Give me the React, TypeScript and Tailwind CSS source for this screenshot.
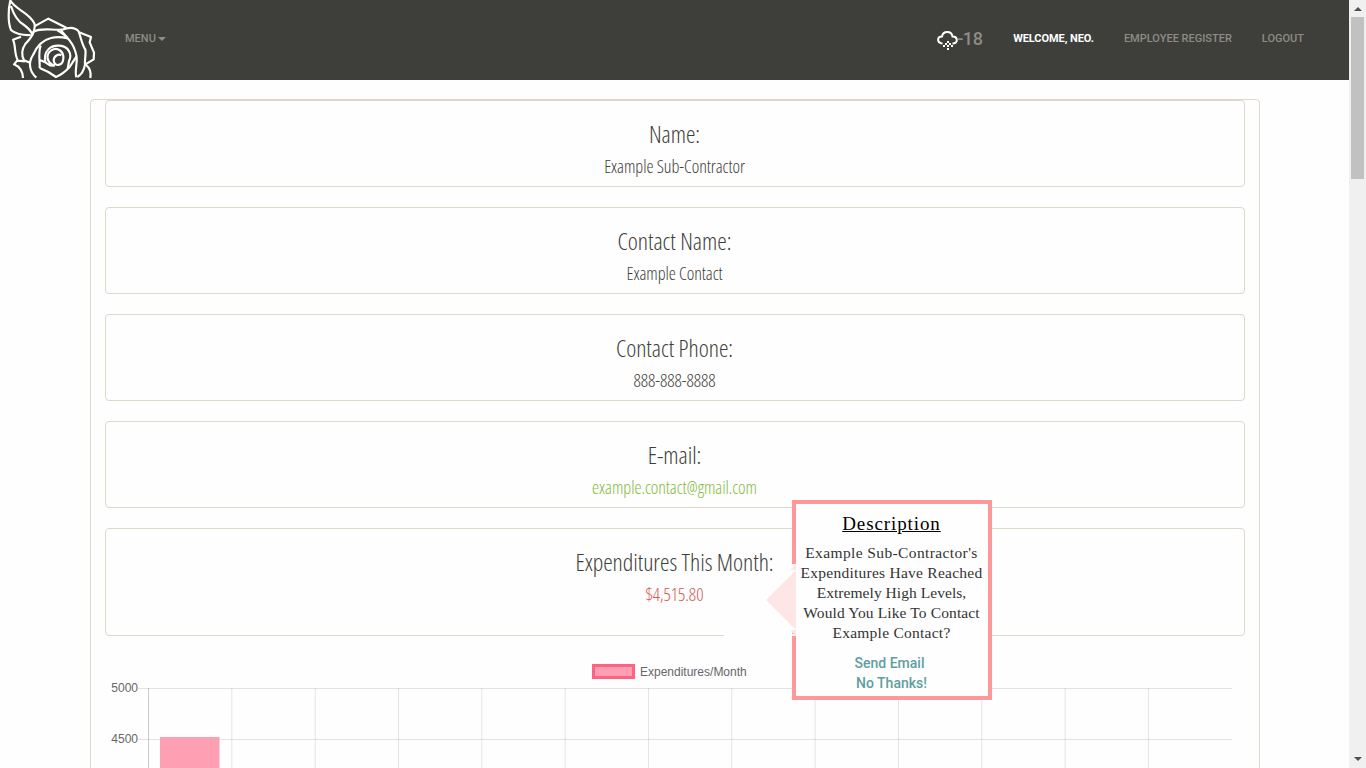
import React from "react";

function Rose() {
  return (
    <svg className="block h-20 w-[100px]" viewBox="0 0 300 240" fill="none" stroke="#fff" strokeWidth="6.5" strokeLinejoin="round">
      <path d="M31 1C25 27 23 66 33 90C43 100 67 107 92 105M31 1C44 28 88 37 103 70C106 80 103 92 97 104M33 18C42 48 55 65 72 75C85 84 93 92 97 104" />
      <path d="M103 79L145 56L199 83M101 95C125 82 154 91 186 89C207 81 226 83 235 93C241 104 243 127 256 149C259 163 253 181 255 194C252 211 244 224 232 231" />
      <path d="M101 95C96 112 88 119 76 132C65 148 63 163 72 181L90 188M63 110L39 119C48 137 42 160 53 180L42 193C57 199 68 210 69 234M53 182L75 184" />
      <path d="M109 233C88 214 84 188 99 165C110 139 128 120 153 114C173 109 187 111 203 115M172 91C202 107 222 132 229 166C234 188 223 211 229 232M203 114L182 91" />
      <path d="M119 204C120 181 114 158 122 137M119 204L145 216L168 231C184 225 196 215 208 202L229 170M119 180L136 187L150 196L164 197" />
      <path d="M136 187C130 154 150 135 178 137C207 139 217 164 207 183L203 206" />
      <path d="M164 197C138 188 137 162 154 151C172 139 192 154 190 176C188 199 163 201 161 182C161 167 176 161 184 166" />
      <path d="M237 97L273 111L269 127L282 158L281 178L255 194M257 194C270 204 274 217 271 234" />
    </svg>
  );
}

function Header() {
  return (
    <header className="flex h-20 items-start bg-[#3e3f3a] font-[Roboto] text-[11px] leading-[15px] font-medium text-[#8e8c84]">
      <Rose />
      <a className="ml-[25px] mt-[31px] flex items-center">MENU<i className="ml-[2px] mt-px border-x-4 border-t-4 border-x-transparent border-t-[#8e8c84]" /></a>
      <div className="ml-auto mr-[45px] flex items-start">
        <div className="mt-[28px] flex h-[22px] text-[18px] leading-[22px] font-medium">
          <svg className="mt-[2px] h-[20px] w-[21px]" viewBox="0 0 21 20" fill="none">
            <path d="M5.5 13.5C-.5 13 0 6.5 5 6.5C6 .5 14.5 .5 15.5 6.5C21 6.5 21.5 13.5 15.5 13.5" stroke="#fff" strokeWidth="2" />
            <path d="M10 11h2v2h-2zM8 13h2v2H8zM12 13h2v2h-2zM6 15h2v2H6zM10 15h2v2h-2zM14 15h2v2h-2zM10 18h2v2h-2z" fill="#fff" />
          </svg>
          <span className="-ml-px w-[26px] whitespace-nowrap tracking-[-.4px]">-18</span>
        </div>
        <b className="ml-[30px] mt-[31px] font-bold tracking-[-.06px] text-white">WELCOME, NEO.</b>
        <a className="ml-[30px] mt-[31px]">EMPLOYEE REGISTER</a>
        <a className="ml-[30px] mt-[31px]">LOGOUT</a>
      </div>
    </header>
  );
}

function Card({ title, value, className = "", last = false }: { title: string; value: string; className?: string; last?: boolean }) {
  return (
    <section className={`rounded border border-[#dfd7ca] pr-px text-center font-['Open_Sans'] font-light text-[#3e3f3a] [font-stretch:75%] ${last ? "h-[108px]" : "mb-5 h-[87px]"}`}>
      <h3 className="mt-[18px] text-[24px] leading-[30px] tracking-[-.04px]">{title}</h3>
      <p className={`mt-[5px] text-[18px] leading-[24px] tracking-[-.06px] ${className}`}>{value}</p>
    </section>
  );
}

function Chart() {
  return (
    <svg className="block h-[133px] w-[1140px]" viewBox="105 636 1140 133" fontFamily="Liberation Sans" fontSize="12" fill="#666">
      <rect x="593.5" y="665.5" width="40" height="12" fill="#ff9fb3" stroke="#ff6384" strokeWidth="3" />
      <text x="640" y="676">Expenditures/Month</text>
      <text x="138" y="692" textAnchor="end">5000</text>
      <text x="138" y="743" textAnchor="end">4500</text>
      <path d="M138 688.5H1232M138 739.5H1232" stroke="#e2e2e2" />
      {Array.from({ length: 13 }, (_, i) => (
        <path key={i} d={`M${148.5 + i * 83.33} 688V769`} stroke="#000" strokeOpacity={i === 0 ? 0.2 : 0.1} />
      ))}
      <path d="M160 737h59.5v32h-59.5z" fill="#ff9fb3" />
    </svg>
  );
}

function Popup() {
  return (
    <aside className="absolute left-[792px] top-[500px] h-[200px] w-[200px] border-4 border-[#ff9999] bg-[#fefefe] text-center font-['Liberation_Serif'] text-[#333]">
      <svg className="absolute -left-[72px] top-[60px] h-[72px] w-[72px]" viewBox="0 0 72 72">
        <path d="M36 36L68 4V0h4v72H0v-2h70z" fill="#fefefe" />
        <path d="M42 36L72 6V66ZM66 6L72 0V6ZM66 66H72V72Z" fill="#ffe6e6" />
        <path d="M66 6H72L70 8ZM66 66H72L70 64Z" fill="#fefefe" />
      </svg>
      <h4 className="mt-[9px] -ml-px text-[19px] leading-[22px] tracking-[.9px] text-black underline">Description</h4>
      <p className="mt-2 -ml-px text-[15.5px] leading-5 tracking-[.25px] whitespace-nowrap">
        <span className="tracking-[.38px]">Example Sub-Contractor's</span><br />Expenditures Have Reached<br /><span className="tracking-[.05px]">Extremely High Levels,</span><br /><span className="tracking-[.12px]">Would You Like To Contact</span><br />Example Contact?
      </p>
      <div className="mt-[10px] pr-[5px] font-[Roboto] text-[14px] leading-5 font-medium text-[#5f9ea0]">
        <div>Send Email</div><div className="pl-1">No Thanks!</div>
      </div>
    </aside>
  );
}

function Scrollbar() {
  return (
    <div className="flex w-[17px] flex-col items-center bg-[#f0f0f0]">
      <i className="mt-[7px] border-x-4 border-b-4 border-x-transparent border-b-[#505050]" />
      <div className="mt-[6px] h-[162px] w-[13px] bg-[#c1c1c1]" />
      <i className="mb-[7px] mt-auto border-x-4 border-t-4 border-x-transparent border-t-[#505050]" />
    </div>
  );
}

export default function App() {
  return (
    <div className="relative flex h-[768px] w-[1366px] overflow-hidden bg-[#fefefe]">
      <div className="w-[1349px]">
        <Header />
        <main className="ml-[90px] mt-[19px] h-[800px] w-[1170px] rounded border border-[#dfd7ca] px-[14px]">
          <Card title="Name:" value="Example Sub-Contractor" />
          <Card title="Contact Name:" value="Example Contact" />
          <Card title="Contact Phone:" value="888-888-8888" />
          <Card title="E-mail:" value="example.contact@gmail.com" className="text-[#84ba3c]" />
          <Card title="Expenditures This Month:" value="$4,515.80" className="text-[#d9534f]" last />
          <Chart />
        </main>
      </div>
      <Scrollbar />
      <Popup />
    </div>
  );
}
